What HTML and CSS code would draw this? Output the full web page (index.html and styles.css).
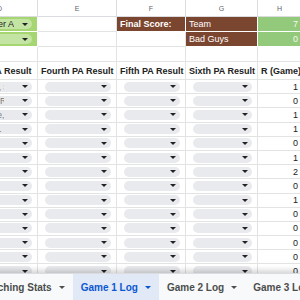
FILE: index.html
```html
<!DOCTYPE html>
<html lang="en">

<head>
    <meta charset="UTF-8">
    <title>Game 1 Log</title>
    <link rel="stylesheet" href="styles.css">
</head>

<body>
    <div class="app">
        <div class="sheet">
            <div class="grid">
                <div class="row col-head">
                    <div class="cell">D</div>
                    <div class="cell">E</div>
                    <div class="cell">F</div>
                    <div class="cell">G</div>
                    <div class="cell">H</div>
                </div>
                <div class="row">
                    <div class="cell green chip-cell"><span class="pill pill-green"><span class="pill-text">Player A</span><span class="arrow"></span></span></div>
                    <div class="cell"></div>
                    <div class="cell brown bold">Final Score:</div>
                    <div class="cell brown">Team</div>
                    <div class="cell green-num">7</div>
                </div>
                <div class="row">
                    <div class="cell green chip-cell"><span class="pill pill-green"><span class="pill-text"></span><span class="arrow"></span></span></div>
                    <div class="cell"></div>
                    <div class="cell"></div>
                    <div class="cell brown">Bad Guys</div>
                    <div class="cell green-num">0</div>
                </div>
                <div class="row">
                    <div class="cell"></div>
                    <div class="cell"></div>
                    <div class="cell"></div>
                    <div class="cell"></div>
                    <div class="cell"></div>
                </div>
                <div class="row table-head">
                    <div class="cell">Third PA Result</div>
                    <div class="cell">Fourth PA Result</div>
                    <div class="cell">Fifth PA Result</div>
                    <div class="cell">Sixth PA Result</div>
                    <div class="cell">R (Game)</div>
                </div>
                <div id="rows"></div>
            </div>
        </div>
        <div class="tabs">
            <div class="tab">Pitching Stats <span class="tab-arrow"></span></div>
            <div class="tab active">Game 1 Log <span class="tab-arrow"></span></div>
            <div class="tab">Game 2 Log <span class="tab-arrow"></span></div>
            <div class="tab">Game 3 Log <span class="tab-arrow"></span></div>
        </div>
    </div>
    <template id="row-template">
        <div class="row data">
            <div class="cell chip-cell"><span class="pill"><span class="pill-text"></span><span class="arrow"></span></span></div>
            <div class="cell chip-cell"><span class="pill"><span class="pill-text"></span><span class="arrow"></span></span></div>
            <div class="cell chip-cell"><span class="pill"><span class="pill-text"></span><span class="arrow"></span></span></div>
            <div class="cell chip-cell"><span class="pill"><span class="pill-text"></span><span class="arrow"></span></span></div>
            <div class="cell num"></div>
        </div>
    </template>
    <script>
        const runs = [1, 0, 1, 1, 0, 1, 2, 0, 1, 0, 0, 0, 0, 0]
        // third PA results, only the end of each chip is in view
        const third = ["Single, Sac", "Home Run", "Double, Sac", "Fielder's Choice"]
        const rowsBox = document.getElementById("rows")
        const template = document.getElementById("row-template")

        runs.forEach((r, i) => {
            const row = document.importNode(template.content, true)
            row.querySelector(".num").textContent = r
            if (third[i]) {
                const text = row.querySelector(".pill-text")
                text.textContent = third[i]
                if (i == 3) text.classList.add("cut")
            }
            rowsBox.appendChild(row)
        })
    </script>
</body>

</html>
```

FILE: styles.css
```css
* {
    box-sizing: border-box;
}

body {
    margin: 0;
    font-family: "Liberation Sans", Arial, sans-serif;
    background-color: #fff;
    overflow: hidden;
}

.app {
    display: flex;
    flex-direction: column;
    height: 300px;
    width: 300px;
    overflow: hidden;
}

.sheet {
    flex: 1;
    overflow: hidden;
}

.grid {
    margin-left: -38px;
    width: 400px;
}

.row {
    display: grid;
    grid-template-columns: 76px 79px 69px 72px 44px;
    height: 15px;
}

.cell {
    display: flex;
    align-items: center;
    border-right: 1px solid #e2e3e3;
    border-bottom: 1px solid #e2e3e3;
    font-size: 9px;
    color: #222;
    padding: 0 3px;
    white-space: nowrap;
    overflow: hidden;
}

.chip-cell {
    padding: 0;
}

.col-head {
    height: 17px;
}

.col-head .cell {
    justify-content: center;
    font-size: 7px;
    color: #5f6368;
    border-color: #dadce0;
}

.green {
    background-color: #a6d672;
    border-color: #fff;
}

.brown {
    background-color: #7b4630;
    color: #fff;
    border-color: #fff;
}

.bold {
    font-weight: bold;
}

.green-num {
    background-color: #93c97b;
    color: #f4f9ef;
    justify-content: flex-end;
    border-color: #fff;
}

.table-head {
    height: 18px;
}

.table-head .cell {
    font-weight: bold;
    font-size: 9px;
    color: #222;
}

.data {
    height: 14.2px;
}

.num {
    justify-content: flex-end;
}

.pill {
    flex: 1;
    display: flex;
    align-items: center;
    justify-content: space-between;
    height: 10px;
    margin: 0 5px 0 7px;
    border-radius: 5px;
    background-color: #e8eaed;
    padding: 0 4px 0 6px;
    min-width: 0;
}

.pill-green {
    background-color: #c4e4a4;
    justify-content: flex-end;
}

.pill-text {
    font-size: 8.5px;
    color: #777;
    overflow: hidden;
    max-width: 29px;
}

.pill-text.cut {
    text-overflow: ellipsis;
}

.pill-green .pill-text {
    font-size: 9px;
    color: #222;
    margin-right: 8px;
    max-width: none;
}

.arrow {
    flex: none;
    width: 0;
    height: 0;
    border-left: 3px solid transparent;
    border-right: 3px solid transparent;
    border-top: 3px solid #222;
}

.tabs {
    display: flex;
    height: 27px;
    background-color: #f8f9fa;
    border-top: 1px solid #dadce0;
    box-shadow: 0 -3px 5px rgba(0, 0, 0, 0.16);
    margin-left: -23px;
    position: relative;
}

.tab {
    display: flex;
    align-items: center;
    gap: 7px;
    padding: 0 8px;
    font-size: 10px;
    font-weight: bold;
    color: #4a4d4c;
    white-space: nowrap;
}

.tab.active {
    background-color: #e1e9f7;
    color: #0b57d0;
}

.tab-arrow {
    width: 0;
    height: 0;
    border-left: 3px solid transparent;
    border-right: 3px solid transparent;
    border-top: 3px solid currentColor;
}
```
